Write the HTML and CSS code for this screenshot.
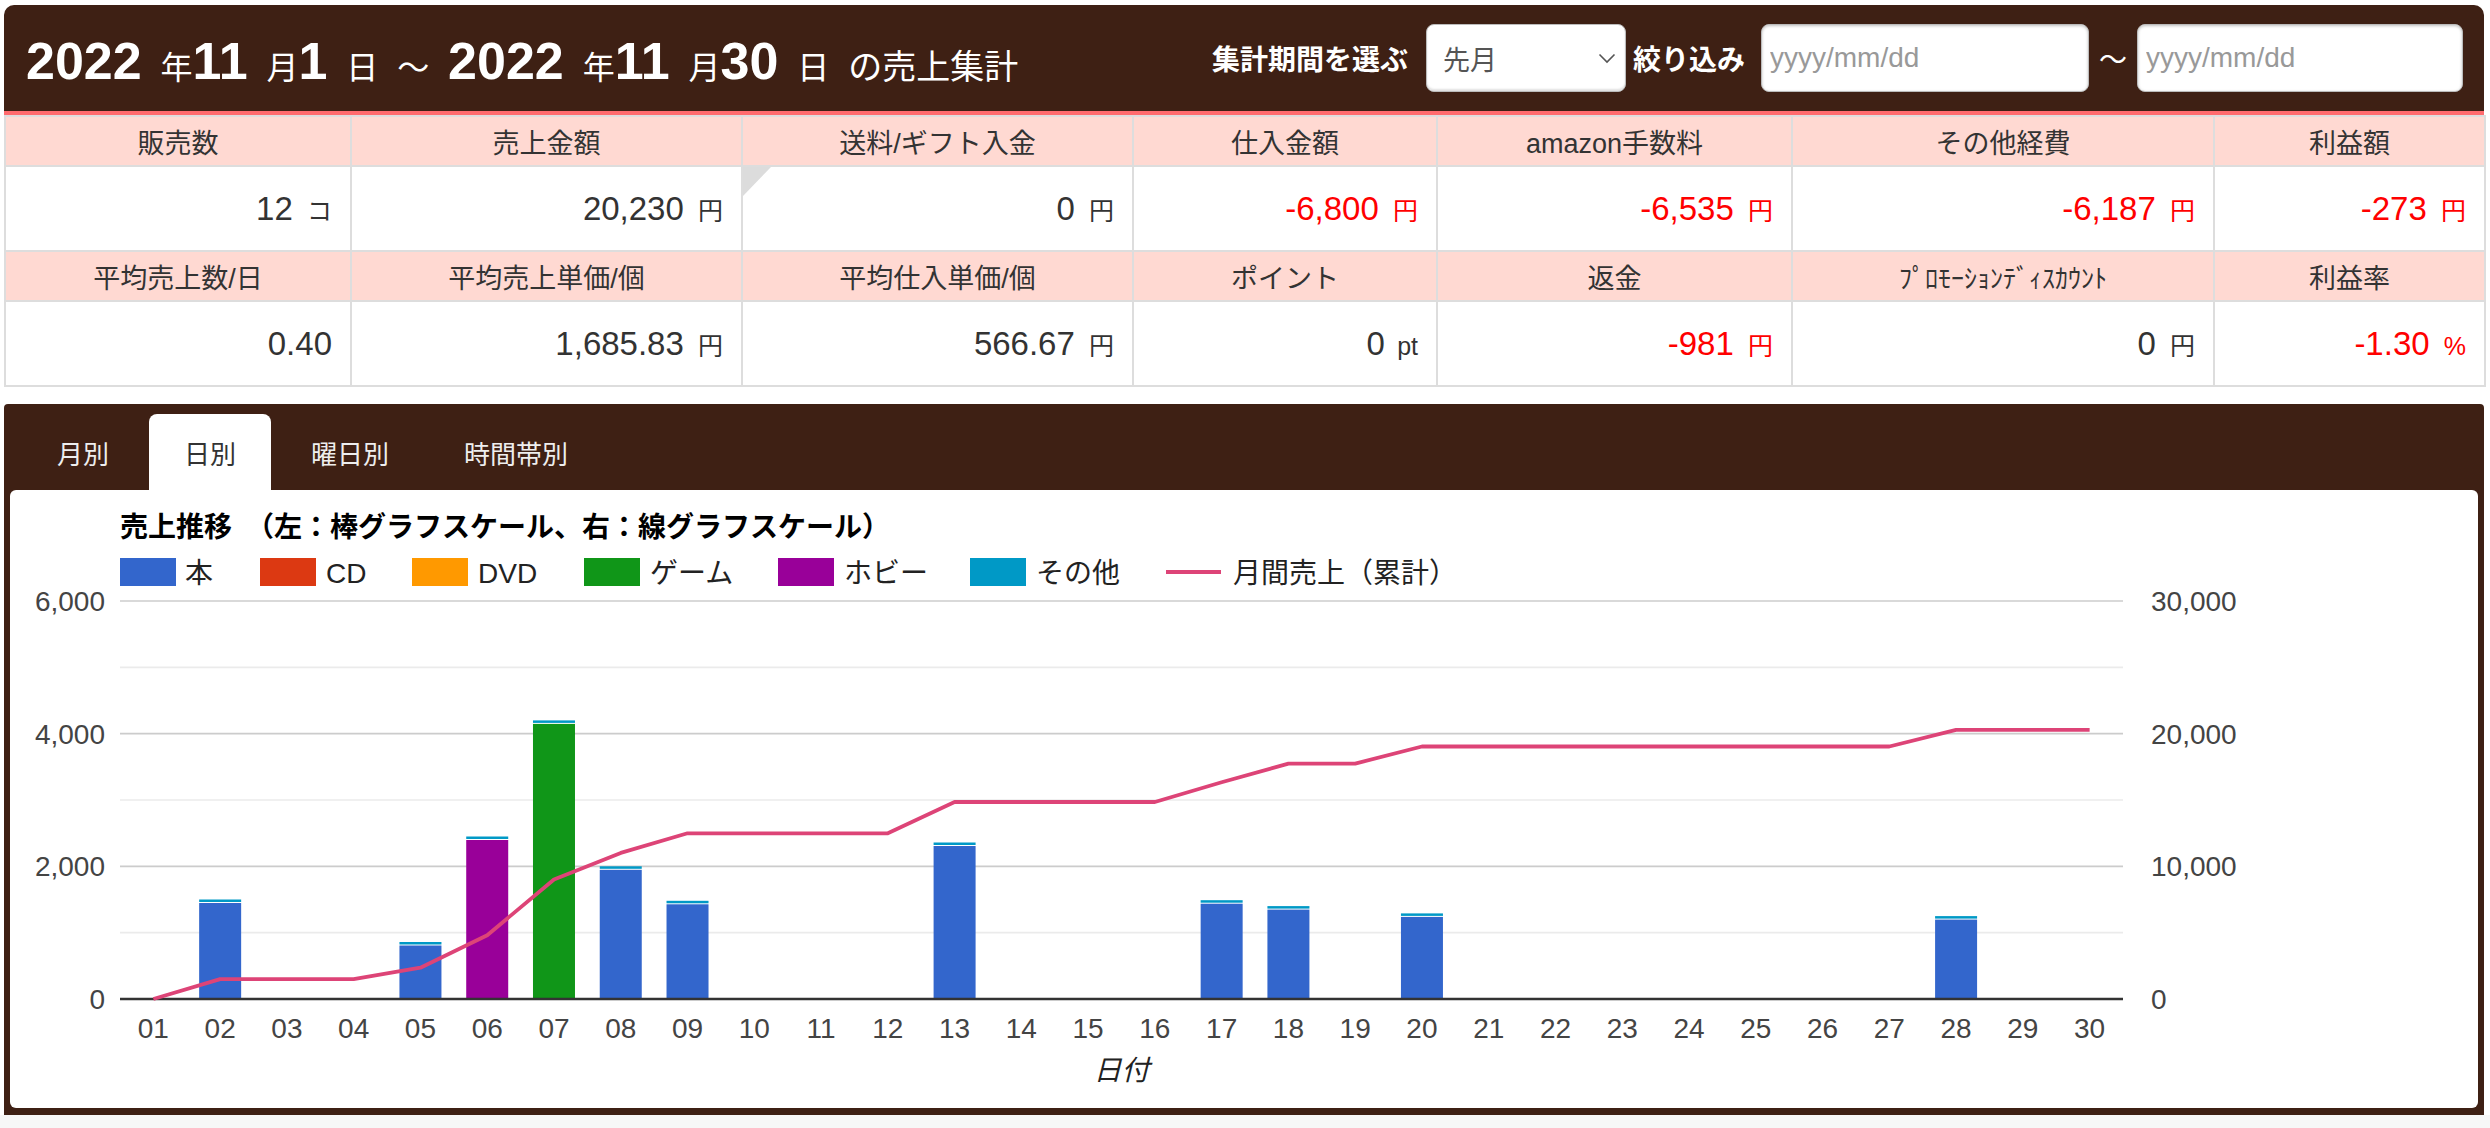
FILE: index.html
```html
<!DOCTYPE html>
<html lang="ja">
<head>
<meta charset="utf-8">
<title>売上集計</title>
<link rel="stylesheet" href="styles.css">
</head>
<body>
<header class="topbar">
  <h1 class="period"><b>2022</b> 年<b>11</b> 月<b>1</b> 日 ～ <b>2022</b> 年<b>11</b> 月<b>30</b> 日 <span class="suffix">の売上集計</span></h1>
  <div class="controls">
    <span class="ctl-label">集計期間を選ぶ</span>
    <div class="select"><span>先月</span><svg width="18" height="11" viewBox="0 0 18 11"><path d="M1.5 1.5 L9 9 L16.5 1.5" fill="none" stroke="#555" stroke-width="1.6"/></svg></div>
    <span class="ctl-label">絞り込み</span>
    <input class="date date-from" type="text" placeholder="yyyy/mm/dd">
    <span class="tilde">～</span>
    <input class="date date-to" type="text" placeholder="yyyy/mm/dd">
  </div>
</header>

<table class="stats">
  <colgroup>
    <col class="c1"><col class="c2"><col class="c3"><col class="c4"><col class="c5"><col class="c6"><col class="c7">
  </colgroup>
  <tr class="head">
    <th>販売数</th><th>売上金額</th><th>送料/ギフト入金</th><th>仕入金額</th><th>amazon手数料</th><th>その他経費</th><th>利益額</th>
  </tr>
  <tr class="vals">
    <td>12 <span class="u">コ</span></td>
    <td>20,230 <span class="u">円</span></td>
    <td class="note">0 <span class="u">円</span></td>
    <td class="neg">-6,800 <span class="u">円</span></td>
    <td class="neg">-6,535 <span class="u">円</span></td>
    <td class="neg">-6,187 <span class="u">円</span></td>
    <td class="neg">-273 <span class="u">円</span></td>
  </tr>
  <tr class="head">
    <th>平均売上数/日</th><th>平均売上単価/個</th><th>平均仕入単価/個</th><th>ポイント</th><th>返金</th><th class="hw">ﾌﾟﾛﾓｰｼｮﾝﾃﾞｨｽｶｳﾝﾄ</th><th>利益率</th>
  </tr>
  <tr class="vals">
    <td>0.40</td>
    <td>1,685.83 <span class="u">円</span></td>
    <td>566.67 <span class="u">円</span></td>
    <td>0 <span class="u pt">pt</span></td>
    <td class="neg">-981 <span class="u">円</span></td>
    <td>0 <span class="u">円</span></td>
    <td class="neg">-1.30 <span class="u">%</span></td>
  </tr>
</table>

<section class="panel">
  <nav class="tabs">
    <a class="tab">月別</a>
    <a class="tab active">日別</a>
    <a class="tab">曜日別</a>
    <a class="tab">時間帯別</a>
  </nav>
  <div class="panel-body">
    <svg class="chart" width="2468" height="618" viewBox="0 0 2468 618">
      <text class="ttl" x="110" y="47">売上推移　（左：棒グラフスケール、右：線グラフスケール）</text>

      <g class="legend">
        <rect x="110" y="68" width="56" height="28" fill="#3366cc"/><text x="175" y="93">本</text>
        <rect x="250" y="68" width="56" height="28" fill="#dc3912"/><text x="316" y="93">CD</text>
        <rect x="402" y="68" width="56" height="28" fill="#ff9900"/><text x="468" y="93">DVD</text>
        <rect x="574" y="68" width="56" height="28" fill="#109618"/><text x="640" y="93">ゲーム</text>
        <rect x="768" y="68" width="56" height="28" fill="#990099"/><text x="834" y="93">ホビー</text>
        <rect x="960" y="68" width="56" height="28" fill="#0099c6"/><text x="1026" y="93">その他</text>
        <line x1="1156" y1="82" x2="1211" y2="82" stroke="#dd4477" stroke-width="4"/><text x="1223" y="93">月間売上（累計）</text>
      </g>

      <g class="grid">
        <line class="minor" x1="110" y1="177.33" x2="2113" y2="177.33"/>
        <line class="minor" x1="110" y1="310" x2="2113" y2="310"/>
        <line class="minor" x1="110" y1="442.67" x2="2113" y2="442.67"/>
        <line class="major" x1="110" y1="111" x2="2113" y2="111"/>
        <line class="major" x1="110" y1="243.67" x2="2113" y2="243.67"/>
        <line class="major" x1="110" y1="376.33" x2="2113" y2="376.33"/>
      </g>

      <g class="bars">
        <rect class="oth" x="189.15" y="409.5" width="42" height="2.5"/><rect class="book" x="189.15" y="413" width="42" height="96"/>
        <rect class="oth" x="389.45" y="452" width="42" height="2.5"/><rect class="book" x="389.45" y="455.5" width="42" height="53.5"/>
        <rect class="oth" x="456.22" y="346.5" width="42" height="2.5"/><rect class="hobby" x="456.22" y="350" width="42" height="159"/>
        <rect class="oth" x="522.98" y="230.4" width="42" height="2.5"/><rect class="game" x="522.98" y="233.9" width="42" height="275.1"/>
        <rect class="oth" x="589.75" y="376.3" width="42" height="2.5"/><rect class="book" x="589.75" y="379.8" width="42" height="129.2"/>
        <rect class="oth" x="656.52" y="410.8" width="42" height="2.5"/><rect class="book" x="656.52" y="414.3" width="42" height="94.7"/>
        <rect class="oth" x="923.59" y="352.5" width="42" height="2.5"/><rect class="book" x="923.59" y="356" width="42" height="153"/>
        <rect class="oth" x="1190.65" y="410.2" width="42" height="2.5"/><rect class="book" x="1190.65" y="413.7" width="42" height="95.3"/>
        <rect class="oth" x="1257.42" y="416.1" width="42" height="2.5"/><rect class="book" x="1257.42" y="419.6" width="42" height="89.4"/>
        <rect class="oth" x="1390.95" y="423.4" width="42" height="2.5"/><rect class="book" x="1390.95" y="426.9" width="42" height="82.1"/>
        <rect class="oth" x="1925.09" y="426.1" width="42" height="2.5"/><rect class="book" x="1925.09" y="429.6" width="42" height="79.4"/>
      </g>

      <line class="base" x1="110" y1="509" x2="2113" y2="509"/>

      <polyline class="cum" points="143.38,509 210.15,489.1 276.92,489.1 343.68,489.1 410.45,477.7 477.22,445.2 543.98,389.5 610.75,362.9 677.52,343.3 744.29,343.3 811.05,343.3 877.82,343.3 944.59,312 1011.35,312 1078.12,312 1144.89,312 1211.65,292.2 1278.42,273.6 1345.19,273.6 1411.95,256.5 1478.72,256.5 1545.49,256.5 1612.25,256.5 1679.02,256.5 1745.79,256.5 1812.55,256.5 1879.32,256.5 1946.09,239.9 2012.85,239.9 2079.62,239.9"/>

      <g class="ax ax-left">
        <text x="95" y="121">6,000</text>
        <text x="95" y="253.67">4,000</text>
        <text x="95" y="386.33">2,000</text>
        <text x="95" y="519">0</text>
      </g>
      <g class="ax ax-right">
        <text x="2141" y="121">30,000</text>
        <text x="2141" y="253.67">20,000</text>
        <text x="2141" y="386.33">10,000</text>
        <text x="2141" y="519">0</text>
      </g>
      <g class="ax ax-x">
        <text x="143.38" y="548">01</text>
        <text x="210.15" y="548">02</text>
        <text x="276.92" y="548">03</text>
        <text x="343.68" y="548">04</text>
        <text x="410.45" y="548">05</text>
        <text x="477.22" y="548">06</text>
        <text x="543.98" y="548">07</text>
        <text x="610.75" y="548">08</text>
        <text x="677.52" y="548">09</text>
        <text x="744.29" y="548">10</text>
        <text x="811.05" y="548">11</text>
        <text x="877.82" y="548">12</text>
        <text x="944.59" y="548">13</text>
        <text x="1011.35" y="548">14</text>
        <text x="1078.12" y="548">15</text>
        <text x="1144.89" y="548">16</text>
        <text x="1211.65" y="548">17</text>
        <text x="1278.42" y="548">18</text>
        <text x="1345.19" y="548">19</text>
        <text x="1411.95" y="548">20</text>
        <text x="1478.72" y="548">21</text>
        <text x="1545.49" y="548">22</text>
        <text x="1612.25" y="548">23</text>
        <text x="1679.02" y="548">24</text>
        <text x="1745.79" y="548">25</text>
        <text x="1812.55" y="548">26</text>
        <text x="1879.32" y="548">27</text>
        <text x="1946.09" y="548">28</text>
        <text x="2012.85" y="548">29</text>
        <text x="2079.62" y="548">30</text>
      </g>
      <text class="ax-title" x="1111.5" y="590">日付</text>
    </svg>
  </div>
</section>
<div class="strip"></div>
</body>
</html>
```

FILE: styles.css
```css
* { box-sizing: border-box; }

html, body { margin: 0; }

body {
  padding: 5px 6px 0 4px;
  background: #fff;
  font-family: "Liberation Sans", "Noto Sans CJK JP", sans-serif;
  color: #333;
}

/* ---------- top bar ---------- */
.topbar {
  display: flex;
  align-items: center;
  justify-content: space-between;
  height: 110px;
  padding: 0 21px 0 22px;
  background: #3e2014;
  border-radius: 10px 10px 0 0;
  border-bottom: 4px solid #ff6b6e;
}

.period {
  margin: 6px 0 0 0;
  color: #fff;
  font-size: 32px;
  font-weight: normal;
  line-height: 1;
  white-space: nowrap;
  word-spacing: 10px;
}

.period b {
  font-size: 52px;
  font-weight: bold;
}

.period .suffix {
  font-size: 34px;
}

.controls {
  display: flex;
  align-items: center;
}

.ctl-label {
  color: #fff;
  font-size: 28px;
  font-weight: bold;
  white-space: nowrap;
}

.select {
  display: flex;
  align-items: center;
  justify-content: space-between;
  width: 200px;
  height: 68px;
  margin: 0 7px 0 18px;
  padding: 0 9px 0 16px;
  background: #fff;
  border: 1px solid #bbb;
  border-radius: 8px;
  box-shadow: inset 0 -2px 2px rgba(0, 0, 0, 0.12);
  font-size: 27px;
  color: #555;
}

.date {
  width: 328px;
  height: 68px;
  margin: 0 0 0 16px;
  padding: 0 8px;
  background: #fff;
  border: 1px solid #bbb;
  border-radius: 8px;
  box-shadow: inset 0 1px 3px rgba(0, 0, 0, 0.25);
  font-family: "Liberation Sans", "Noto Sans CJK JP", sans-serif;
  font-size: 28px;
  color: #333;
  outline: none;
}

.date::placeholder { color: #999; }

.date-to {
  width: 326px;
  margin-left: 0;
}

.tilde {
  margin: 0 10px;
  color: #fff;
  font-size: 28px;
}

/* ---------- stats table ---------- */
.stats {
  width: 100%;
  border-collapse: collapse;
  table-layout: fixed;
}

.c1 { width: 346px; }
.c2 { width: 391px; }
.c3 { width: 391px; }
.c4 { width: 304px; }
.c5 { width: 355px; }
.c6 { width: 422px; }
.c7 { width: 271px; }

.stats th,
.stats td {
  border: 2px solid #ddd;
}

.stats th {
  height: 50px;
  padding: 0;
  background: #ffd9d2;
  font-size: 27px;
  font-weight: normal;
  color: #333;
  text-align: center;
  white-space: nowrap;
}

.stats th.hw { font-size: 26px; }

.stats td {
  height: 85px;
  padding: 0 18px 0 0;
  text-align: right;
  font-size: 33px;
  color: #333;
  white-space: nowrap;
}

.stats td .u {
  margin-left: 5px;
  font-size: 25px;
}

.stats td .u.pt { font-size: 25px; margin-left: 3px; }

.stats td.neg { color: #ff0000; }

.stats td.note { position: relative; }

.stats td.note::before {
  content: "";
  position: absolute;
  left: 0;
  top: 0;
  border-style: solid;
  border-width: 29px 28px 0 0;
  border-color: #dcdcdc transparent transparent transparent;
}

/* ---------- chart panel ---------- */
.panel {
  margin-top: 17px;
  padding: 0 6px 7px;
  background: #3e2014;
  border-radius: 4px 4px 0 0;
}

.tabs {
  display: flex;
  height: 86px;
  padding: 10px 0 0 12px;
}

.tab {
  display: flex;
  align-items: center;
  padding: 0 35px;
  margin-right: 5px;
  font-size: 26px;
  color: #eee;
  border-radius: 8px 8px 0 0;
}

.tab.active {
  background: #fff;
  color: #333;
}

.panel-body {
  height: 618px;
  background: #fff;
  border-radius: 6px;
}

.chart {
  display: block;
}

.chart text {
  font-family: "Liberation Sans", "Noto Sans CJK JP", sans-serif;
  font-size: 28px;
}

.chart .ttl {
  font-weight: bold;
  fill: #000;
}

.chart .legend text { fill: #222; }

.chart .grid .major { stroke: #cccccc; stroke-width: 1.7; }
.chart .grid .minor { stroke: #ebebeb; stroke-width: 1.7; }

.chart .base { stroke: #333; stroke-width: 2.4; }

.chart .book { fill: #3366cc; }
.chart .hobby { fill: #990099; }
.chart .game { fill: #109618; }
.chart .oth { fill: #0099c6; }

.chart .cum {
  fill: none;
  stroke: #dd4477;
  stroke-width: 3.8;
  stroke-linejoin: round;
}

.chart .ax text { fill: #444; }
.chart .ax-left text { text-anchor: end; }
.chart .ax-right text { text-anchor: start; }
.chart .ax-x text { text-anchor: middle; }

.chart .ax-title {
  fill: #222;
  font-style: italic;
  text-anchor: middle;
}

.strip {
  height: 13px;
  margin: 0 -6px 0 -4px;
  background: #f7f7f7;
}
```
